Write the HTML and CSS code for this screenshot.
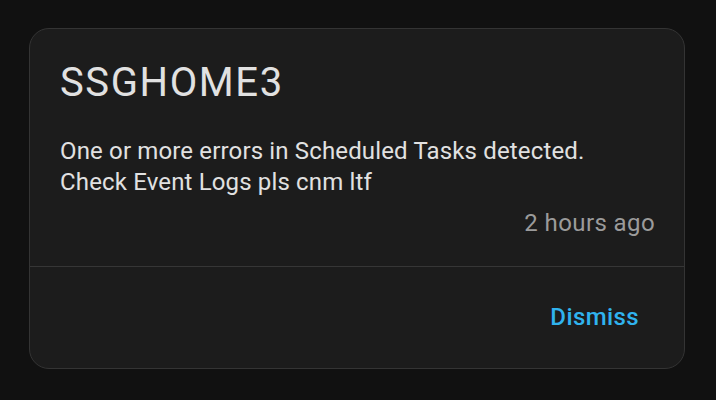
FILE: index.html
```html
<!DOCTYPE html>
<html>
<head>
<meta charset="utf-8">
<link rel="stylesheet" href="styles.css">
</head>
<body>
<div class="card">
  <div class="content">
    <div class="title">SSGHOME3</div>
    <div class="message">One or more errors in Scheduled Tasks detected.<br>Check Event Logs pls cnm ltf</div>
    <div class="time">2 hours ago</div>
  </div>
  <div class="actions">
    <button class="dismiss">Dismiss</button>
  </div>
</div>
</body>
</html>
```
FILE: styles.css
```css
html, body {
  margin: 0;
  padding: 0;
  background: #111111;
  width: 716px;
  height: 400px;
  overflow: hidden;
}
body {
  padding: 28px 31px 0 29px;
  box-sizing: border-box;
  font-family: Roboto, "Noto Sans", sans-serif;
}
.card {
  background: #1c1c1c;
  border: 1px solid #343434;
  border-radius: 20px;
  height: 341px;
  box-sizing: border-box;
  display: flex;
  flex-direction: column;
}
.content {
  padding: 30px 29px 0 30px;
  height: 238px;
  box-sizing: border-box;
  border-bottom: 1px solid #363636;
}
.title {
  font-size: 40px;
  line-height: 48px;
  letter-spacing: 1.6px;
  color: #e1e1e1;
  margin-bottom: 29px;
}
.message {
  font-size: 24px;
  line-height: 31px;
  letter-spacing: 0.15px;
  color: #e1e1e1;
}
.time {
  text-align: right;
  font-size: 24px;
  line-height: 31px;
  letter-spacing: 0.4px;
  color: #9b9b9b;
  margin-top: 9.5px;
}
.actions {
  display: flex;
  justify-content: flex-end;
  padding: 29.5px 29px 0 0;
}
.dismiss {
  background: none;
  border: none;
  font-family: Roboto, sans-serif;
  font-size: 24px;
  font-weight: 500;
  letter-spacing: 0.4px;
  color: #30b3ee;
  padding: 0 16px;
  line-height: 40px;
}
```
